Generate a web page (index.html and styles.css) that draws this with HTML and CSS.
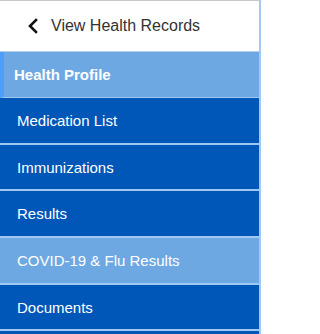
FILE: index.html
```
<!DOCTYPE html>
<html>
<head>
<meta charset="utf-8">
<link rel="stylesheet" href="styles.css">
</head>
<body>
<nav class="sidebar">
  <div class="back">
    <svg class="chev" width="12" height="16" viewBox="0 0 12 16"><path d="M9 2 L3 8 L9 14" fill="none" stroke="#111" stroke-width="2.6" stroke-linecap="square" stroke-linejoin="miter"/></svg>
    <span class="back-label">View Health Records</span>
  </div>
  <ul class="menu">
    <li class="item active">Health Profile</li>
    <li class="item">Medication List</li>
    <li class="item">Immunizations</li>
    <li class="item">Results</li>
    <li class="item light">COVID-19 &amp; Flu Results</li>
    <li class="item">Documents</li>
  </ul>
</nav>
</body>
</html>
```
FILE: styles.css
```
html, body {
  margin: 0;
  padding: 0;
  background: #ffffff;
  overflow: hidden;
}
.sidebar {
  width: 259px;
  height: 333px;
  overflow: hidden;
  background: #0057b8;
  border-right: 2px solid #a4c8ef;
  border-top: 1px solid #c8c8c8;
  font-family: "Liberation Sans", Arial, sans-serif;
}
.back {
  height: 50px;
  display: flex;
  align-items: center;
  padding-left: 27px;
  gap: 12px;
  background: #ffffff;
  border-bottom: 1px solid #b3cfee;
}
.chev {
  display: block;
}
.back-label {
  font-size: 16px;
  color: #333333;
}
.menu {
  list-style: none;
  margin: 0;
  padding: 0;
}
.item {
  height: 44.7px;
  display: flex;
  align-items: center;
  padding-left: 17px;
  font-size: 15px;
  color: #ffffff;
  background: #0057b8;
  border-bottom: 2px solid #9fc9f3;
}
.item.active {
  height: 45px;
  background: #6ea8e2;
  font-weight: bold;
  padding-left: 10px;
  border-left: 4px solid #4c9ef8;
  border-bottom: 1px solid #9fc9f3;
}
.item.light {
  background: #6ea8e2;
}
```
